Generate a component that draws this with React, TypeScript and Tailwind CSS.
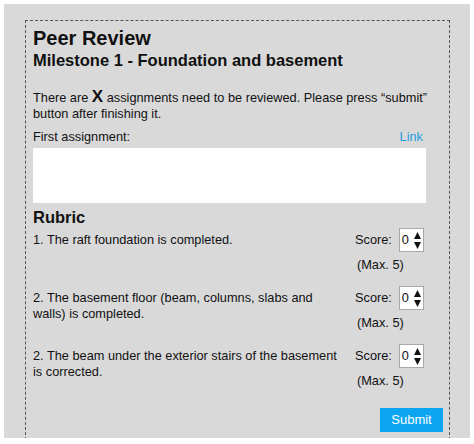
const rubric = [
  { id: 1, text: '1. The raft foundation is completed.' },
  { id: 2, text: '2. The basement floor (beam, columns, slabs and walls) is completed.' },
  { id: 3, text: '2. The beam under the exterior stairs of the basement is corrected.' },
];

function ScoreInput() {
  return (
    <div className="flex h-[24px] w-[25px] items-center border border-[#a8a8a8] bg-white pl-[2px]">
      <span className="text-[12.75px] leading-none">0</span>
      <svg width="7" height="17" viewBox="0 0 7 17" className="ml-[5px]">
        <polygon points="3.5,0 7,7 0,7" fill="#111" />
        <polygon points="0,10 7,10 3.5,17" fill="#111" />
      </svg>
    </div>
  );
}

function RubricItem({ text }: { text: string }) {
  return (
    <div className="flex h-[58px] items-start">
      <p className="w-[312px] pt-[4px]">{text}</p>
      <div className="ml-[10px] flex flex-col">
        <div className="flex h-[24px] items-center gap-[7px]">
          <span>Score:</span>
          <ScoreInput />
        </div>
        <span className="ml-[2px] mt-[5px]">(Max. 5)</span>
      </div>
    </div>
  );
}

export default function App() {
  return (
    <div className="h-[444px] w-[474px] overflow-hidden bg-white pl-[4px] pt-[4px] font-['Liberation_Sans',Arial,sans-serif] text-[#111]">
      <div className="h-[434px] w-[466px] overflow-hidden bg-[#d9d9d9] pl-[21px] pt-[16px]">
        <div className="h-[430px] w-[425px] border border-b-0 border-dashed border-[#555] pl-[7px] pr-[6px] pt-[5px] text-[12.75px] leading-[16px]">
          <h1 className="text-[20px] font-bold leading-[24px]">Peer Review</h1>
          <h2 className="text-[16.5px] font-bold leading-[20px]">Milestone 1 - Foundation and basement</h2>

          <p className="mt-[20px]">
            There are <span className="text-[17px] font-bold leading-[0]">X</span> assignments need to be reviewed. Please press “submit” button after finishing it.
          </p>

          <div className="mt-[7px] w-[393px]">
            <div className="flex justify-between pr-[3px]">
              <span>First assignment:</span>
              <a className="text-[#1f9fe2]">Link</a>
            </div>
            <div className="mt-[3px] h-[55px] bg-white" />
          </div>

          <h3 className="mt-[4px] text-[16.5px] font-bold leading-[20px]">Rubric</h3>

          <div className="mt-[1px]">
            {rubric.map((r) => (
              <RubricItem key={r.id} text={r.text} />
            ))}
          </div>

          <div className="mt-[6px] flex justify-end">
            <button className="h-[24px] w-[63px] bg-[#0ca5f2] text-[13px] text-white">Submit</button>
          </div>
        </div>
      </div>
    </div>
  );
}
